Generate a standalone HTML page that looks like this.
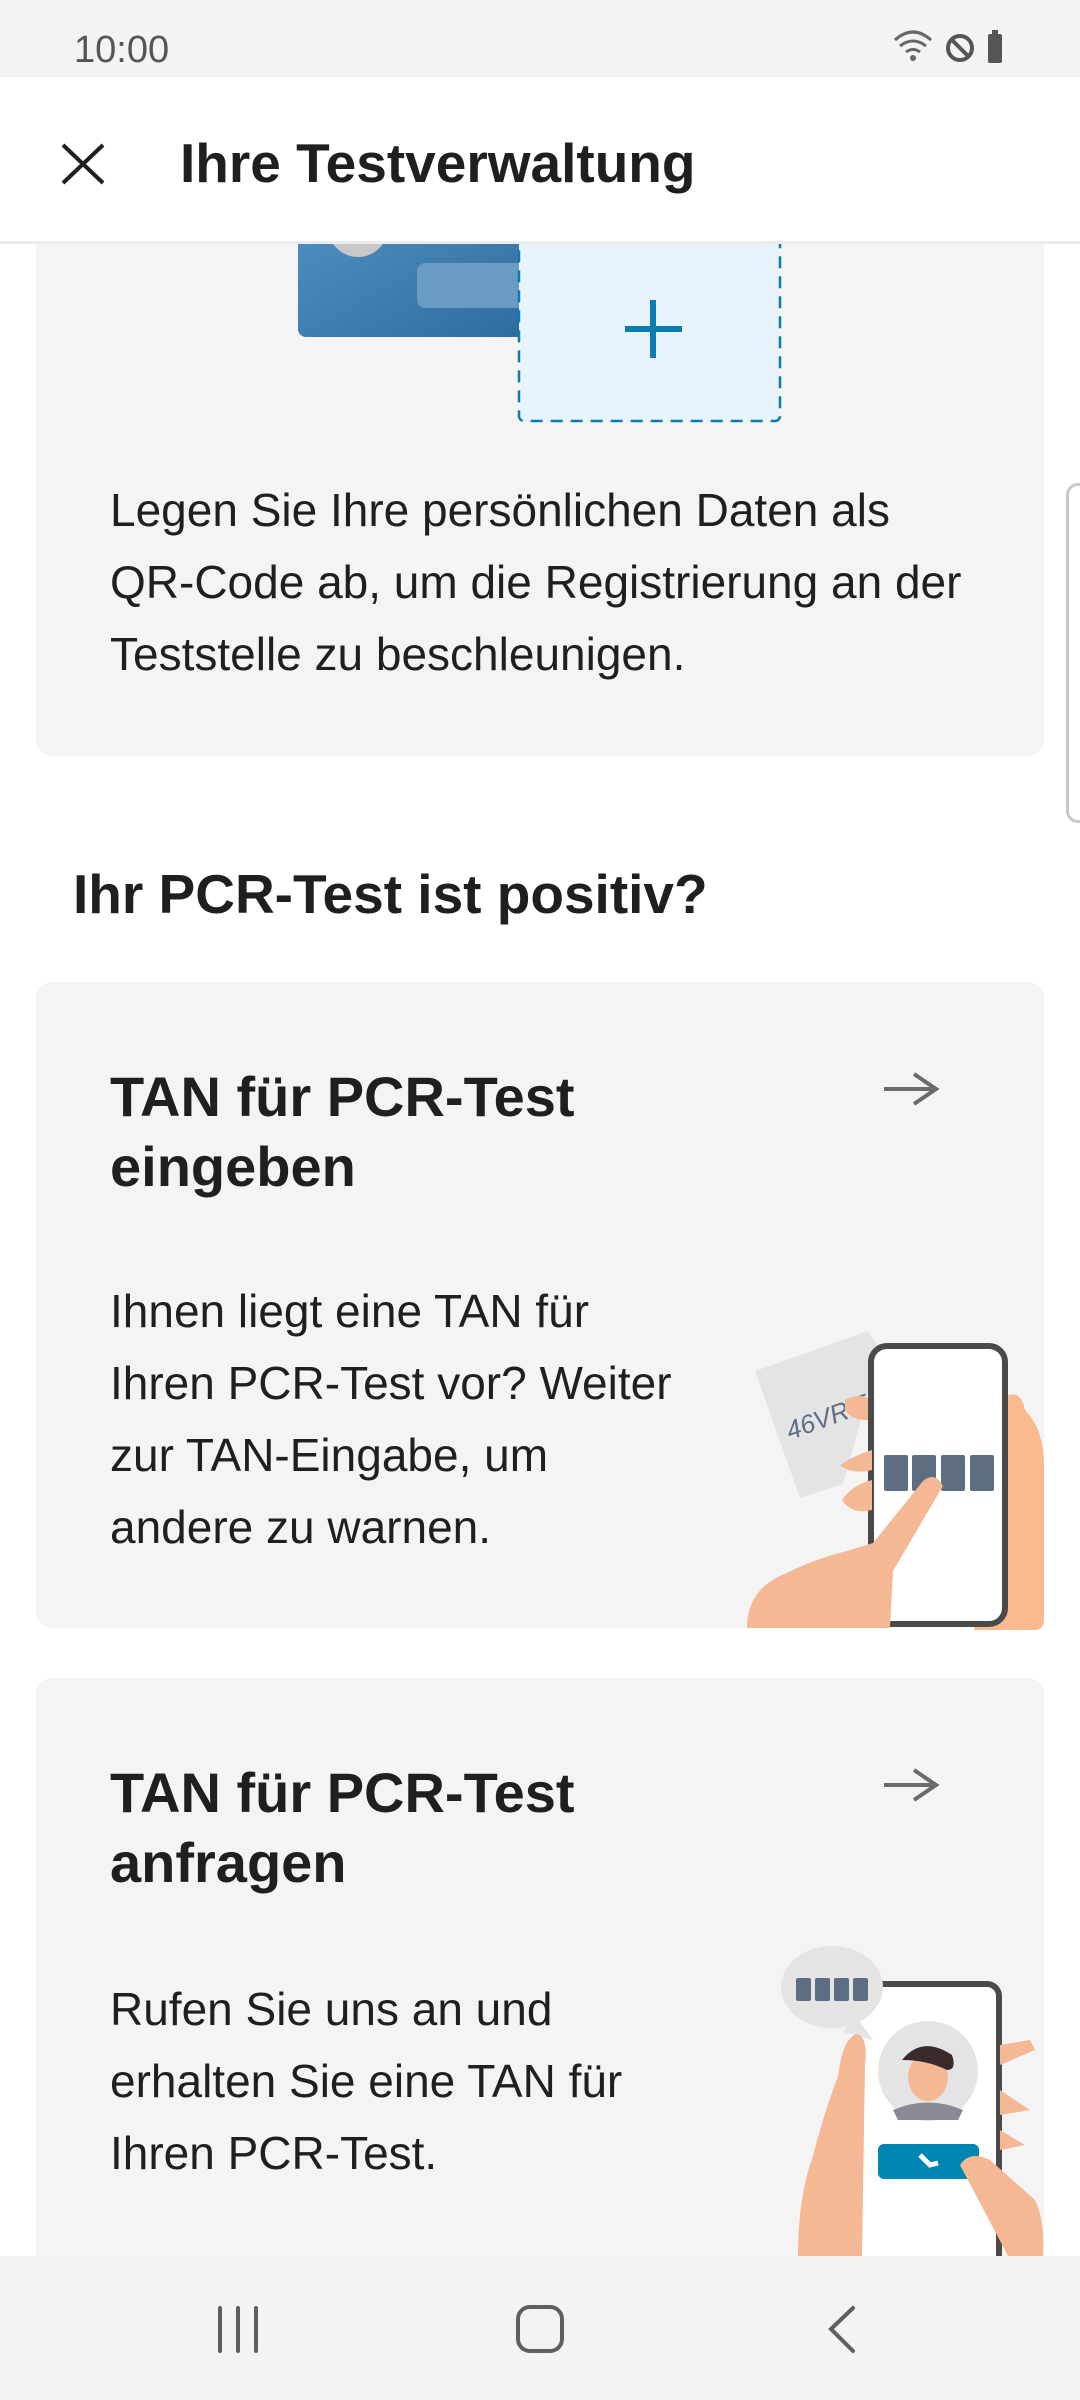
<!DOCTYPE html>
<html><head><meta charset="utf-8"><style>
*{margin:0;padding:0;box-sizing:border-box}
body{width:1080px;height:2400px;background:#fff;position:relative;overflow:hidden;font-family:"Liberation Sans",sans-serif;color:#1f1f1f}
.abs{position:absolute}
.card{position:absolute;left:36px;width:1008px;background:#f4f4f4;border-radius:16px}
.body{position:absolute;left:110px;font-size:46px;line-height:72px;white-space:nowrap;color:#1f1f1f}
.h{position:absolute;left:110px;font-size:56px;line-height:70px;font-weight:bold;white-space:nowrap;color:#1f1f1f}
</style></head><body>
<!-- card1 -->
<div class="card" style="top:160px;height:596px"></div>
<div class="body" style="top:474px">Legen Sie Ihre persönlichen Daten als<br>QR-Code ab, um die Registrierung an der<br>Teststelle zu beschleunigen.</div>
<!-- scrollbar -->
<div class="abs" style="left:1066px;top:483px;width:20px;height:340px;border:3px solid #c8c8c8;border-right:none;border-radius:12px 0 0 12px"></div>
<div class="abs" style="left:73px;top:862px;font-size:55px;font-weight:bold;white-space:nowrap">Ihr PCR-Test ist positiv?</div>
<!-- card2 -->
<div class="card" style="top:982px;height:646px"></div>
<div class="h" style="top:1062px">TAN für PCR-Test<br>eingeben</div>
<div class="body" style="top:1275px">Ihnen liegt eine TAN für<br>Ihren PCR-Test vor? Weiter<br>zur TAN-Eingabe, um<br>andere zu warnen.</div>
<!-- card3 -->
<div class="card" style="top:1678px;height:600px"></div>
<div class="h" style="top:1758px">TAN für PCR-Test<br>anfragen</div>
<div class="body" style="top:1973px">Rufen Sie uns an und<br>erhalten Sie eine TAN für<br>Ihren PCR-Test.</div>

<svg class="abs" style="left:0;top:0" width="1080" height="2400" viewBox="0 0 1080 2400">
<defs><linearGradient id="g" x1="0" y1="0" x2="1" y2="1"><stop offset="0" stop-color="#5293c2"/><stop offset="1" stop-color="#2e6a9e"/></linearGradient></defs>
<rect x="298" y="200" width="240" height="137" rx="8" fill="url(#g)"/>
<circle cx="358" cy="227" r="30" fill="#c8c8c8"/>
<rect x="417" y="263" width="110" height="45" rx="8" fill="#6a9bc2"/>
<rect x="519" y="230" width="261" height="191" rx="5" fill="#e8f4fc" stroke="#0a7cb0" stroke-width="2.5" stroke-dasharray="12 8"/>
<path d="M625 329h57M653 300v58" stroke="#0a7cb0" stroke-width="6"/>
<path d="M884 1089h52M914 1074l22 15-22 15" stroke="#6b6b6b" stroke-width="4" fill="none"/>
<path d="M884 1785h52M914 1770l22 15-22 15" stroke="#6b6b6b" stroke-width="4" fill="none"/>
<polygon points="755,1371 868,1331 880,1350 843,1484 800,1498" fill="#e4e4e4"/>
<text x="790" y="1440" font-size="26" fill="#5d6e83" transform="rotate(-20 790 1440)" font-style="italic">46VR:58</text>
<path d="M845 1400 q20 -10 30 5 l-2 15 q-20 2 -28 -10z" fill="#f5b894"/>
<path d="M1000 1400 q20 -15 25 10 q20 20 19 60 v150 q0 10 -10 10 h-60 z" fill="#fbba8e"/>
<rect x="871" y="1346" width="134" height="278" rx="16" fill="#fff" stroke="#4a4a4a" stroke-width="6"/>
<rect x="884" y="1455" width="24" height="36" rx="2" fill="#5d6e83"/>
<rect x="912" y="1455" width="24" height="36" rx="2" fill="#5d6e83"/>
<rect x="941" y="1455" width="24" height="36" rx="2" fill="#5d6e83"/>
<rect x="970" y="1455" width="24" height="36" rx="2" fill="#5d6e83"/>
<path d="M747 1628 q0 -40 40 -55 q30 -15 60 -22 l26 -8 l50 -62 q12 -10 20 5 l-50 85 l-3 57z" fill="#f5b894"/>
<path d="M842 1500 q10 -15 30 -20 v30 q-20 5 -30 -10z M840 1465 q15 -10 32 -15 v20 q-20 5 -32 -5z" fill="#f5b894"/>
<rect x="857" y="1984" width="142" height="290" rx="12" fill="#fff" stroke="#4a4a4a" stroke-width="6"/>
<ellipse cx="832" cy="1987" rx="51" ry="41" fill="#e4e4e4"/>
<path d="M855 2015 l18 25 l-30 -8z" fill="#e4e4e4"/>
<rect x="796" y="1978" width="15" height="23" rx="2" fill="#5d6e83"/>
<rect x="815" y="1978" width="15" height="23" rx="2" fill="#5d6e83"/>
<rect x="834" y="1978" width="15" height="23" rx="2" fill="#5d6e83"/>
<rect x="853" y="1978" width="15" height="23" rx="2" fill="#5d6e83"/>
<circle cx="928" cy="2071" r="50" fill="#e4e4e4"/>
<path d="M893 2110 q35 -15 70 0 l-5 10 h-60z" fill="#8a8a94"/>
<ellipse cx="928" cy="2077" rx="20" ry="24" fill="#f5b894"/>
<path d="M902 2060 q20 -25 50 -5 q5 15 -5 15 q-20 -10 -45 -10z" fill="#3a2a2a"/>
<rect x="878" y="2144" width="101" height="35" rx="6" fill="#0086b3"/>
<path d="M920 2155 l10 10 l8 -2" stroke="#fff" stroke-width="5" fill="none"/>
<path d="M798 2256 q0 -60 15 -100 q10 -40 25 -80 q5 -40 20 -42 q10 5 7 30 l-3 192z" fill="#f5b894"/>
<path d="M1000 2045 l30 -5 l5 10 l-35 15z M1000 2090 l30 20 l-30 5z M1000 2130 l25 15 l-25 5z" fill="#f5b894"/>
<path d="M960 2165 q10 -15 30 -5 l45 40 q10 20 8 56 h-35 z" fill="#f5b894"/>
<rect x="0" y="0" width="1080" height="77" fill="#f3f3f3"/>
<text x="74" y="62" font-size="38" fill="#555" font-family="Liberation Sans">10:00</text>
<path d="M895 40 q18 -16 36 0 M900 46 q13 -10 26 0 M906 52 q7 -5 14 0" stroke="#666" stroke-width="3" fill="none"/>
<circle cx="913" cy="58" r="3" fill="#666"/>
<circle cx="960" cy="48" r="12" fill="none" stroke="#555" stroke-width="4"/>
<path d="M952 40 l16 16" stroke="#555" stroke-width="4"/>
<rect x="988" y="34" width="14" height="29" rx="2" fill="#555"/><rect x="992" y="30" width="6" height="5" fill="#555"/>
<rect x="0" y="77" width="1080" height="165" fill="#fff"/>
<rect x="0" y="241" width="1080" height="3" fill="#ececec"/>
<path d="M63 145l40 38M103 145l-40 38" stroke="#1f1f1f" stroke-width="4"/>
<text x="180" y="182" font-size="55" font-weight="bold" fill="#1f1f1f" font-family="Liberation Sans">Ihre Testverwaltung</text>
<rect x="0" y="2256" width="1080" height="144" fill="#f3f3f3"/>
<path d="M220 2308v43M238 2308v43M256 2308v43" stroke="#5f5f5f" stroke-width="4" stroke-linecap="round"/>
<rect x="518" y="2307" width="44" height="44" rx="12" fill="none" stroke="#5f5f5f" stroke-width="4"/>
<path d="M853 2308l-22 21 22 22" stroke="#5f5f5f" stroke-width="4" fill="none" stroke-linecap="round"/>
</svg>
</body></html>
